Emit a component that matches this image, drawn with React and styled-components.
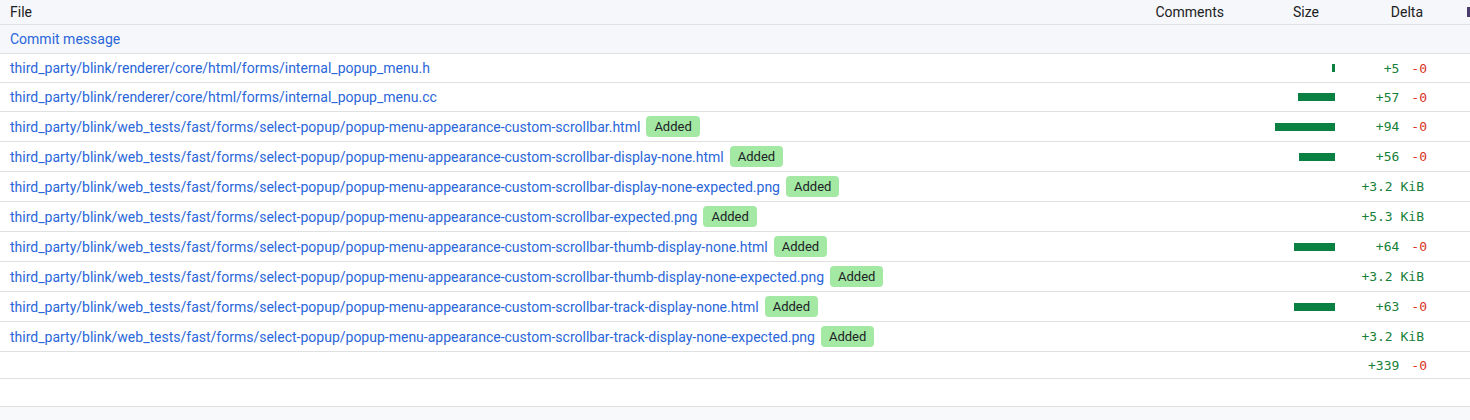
import React from 'react';
import styled, { createGlobalStyle } from 'styled-components';

const GlobalStyle = createGlobalStyle`
  html, body {
    margin: 0;
    padding: 0;
    background: #f8f9fa;
    font-family: Roboto, "Noto Sans", Arial, sans-serif;
    overflow: hidden;
  }
`;

const Table = styled.div`
  width: 1470px;
  background: #ffffff;
  font-size: 14px;
  color: #212121;
  border-bottom: 1px solid #e0e0e0;
`;

const Row = styled.div`
  display: grid;
  grid-template-columns: 1140px 92px 111px 97px 30px;
  align-items: center;
  border-bottom: 1px solid #e0e0e0;
  background: ${(p) => (p.$shaded ? '#f5f7fb' : '#ffffff')};
  min-height: ${(p) => p.$height || 28}px;
  box-sizing: border-box;

  &:last-child {
    border-bottom: none;
  }
`;

const HeaderCell = styled.div`
  line-height: 24px;
  text-align: ${(p) => p.$align || 'left'};
  padding: 0 ${(p) => p.$padRight || 0}px 0 ${(p) => p.$padLeft || 0}px;
  white-space: nowrap;
  overflow: hidden;
`;

const FileCell = styled.div`
  display: flex;
  align-items: center;
  gap: 6px;
  padding: 4px 0 4px 10px;
  line-height: 20px;
  white-space: nowrap;
`;

const FileLink = styled.a`
  color: #2a66d9;
  text-decoration: none;
  cursor: pointer;
`;

const Badge = styled.span`
  display: inline-block;
  background: #a3e9a4;
  color: #202124;
  font-size: 13px;
  line-height: 19px;
  padding: 1px 8px;
  border-radius: 4px;
`;

const Cell = styled.div``;

const SizeCell = styled.div`
  display: flex;
  justify-content: flex-end;
  align-items: center;
  padding-right: 8px;
`;

const Bar = styled.div`
  height: 8px;
  background: #0b8043;
`;

const DeltaCell = styled.div`
  display: flex;
  justify-content: flex-end;
  align-items: center;
  padding-right: ${(p) => (p.$single ? 16 : 13)}px;
  font-family: "DejaVu Sans Mono", "Liberation Mono", monospace;
  font-size: 13px;
  line-height: 19px;
  white-space: nowrap;
`;

const Added = styled.span`
  color: #188038;
`;

const Removed = styled.span`
  color: #d93025;
  margin-left: 12px;
`;

const Edge = styled.div`
  display: flex;
  align-items: center;
  padding-left: 27px;
  overflow: hidden;
`;

const EdgeMark = styled.span`
  display: inline-block;
  width: 3px;
  height: 10px;
  background: #4a3c6b;
`;

/* the clipped first letter of the next column */
const EdgeGlyph = styled.span`
  display: inline-block;
  width: 3px;
  height: 2px;
  margin-top: -6px;
  background: #5f6368;
`;

const files = [
  { path: 'third_party/blink/renderer/core/html/forms/internal_popup_menu.h', bar: 3, plus: '+5', minus: '-0', edge: true },
  { path: 'third_party/blink/renderer/core/html/forms/internal_popup_menu.cc', bar: 37, plus: '+57', minus: '-0' },
  { path: 'third_party/blink/web_tests/fast/forms/select-popup/popup-menu-appearance-custom-scrollbar.html', added: true, bar: 60, plus: '+94', minus: '-0' },
  { path: 'third_party/blink/web_tests/fast/forms/select-popup/popup-menu-appearance-custom-scrollbar-display-none.html', added: true, bar: 36, plus: '+56', minus: '-0' },
  { path: 'third_party/blink/web_tests/fast/forms/select-popup/popup-menu-appearance-custom-scrollbar-display-none-expected.png', added: true, plus: '+3.2 KiB' },
  { path: 'third_party/blink/web_tests/fast/forms/select-popup/popup-menu-appearance-custom-scrollbar-expected.png', added: true, plus: '+5.3 KiB' },
  { path: 'third_party/blink/web_tests/fast/forms/select-popup/popup-menu-appearance-custom-scrollbar-thumb-display-none.html', added: true, bar: 41, plus: '+64', minus: '-0' },
  { path: 'third_party/blink/web_tests/fast/forms/select-popup/popup-menu-appearance-custom-scrollbar-thumb-display-none-expected.png', added: true, plus: '+3.2 KiB' },
  { path: 'third_party/blink/web_tests/fast/forms/select-popup/popup-menu-appearance-custom-scrollbar-track-display-none.html', added: true, bar: 41, plus: '+63', minus: '-0' },
  { path: 'third_party/blink/web_tests/fast/forms/select-popup/popup-menu-appearance-custom-scrollbar-track-display-none-expected.png', added: true, plus: '+3.2 KiB' },
];

const Delta = ({ plus, minus }) => (
  <DeltaCell $single={!minus}>
    <Added>{plus}</Added>
    {minus && <Removed>{minus}</Removed>}
  </DeltaCell>
);

export default function App() {
  return (
    <>
      <GlobalStyle />
      <Table>
        <Row $shaded $height={25}>
          <HeaderCell $padLeft={10}>File</HeaderCell>
          <HeaderCell $align="right" $padRight={8}>Comments</HeaderCell>
          <HeaderCell $align="right" $padRight={24}>Size</HeaderCell>
          <HeaderCell $align="right" $padRight={17}>Delta</HeaderCell>
          <Edge><EdgeMark /></Edge>
        </Row>
        <Row $shaded>
          <FileCell><FileLink>Commit message</FileLink></FileCell>
          <Cell />
          <Cell />
          <Cell />
          <Cell />
        </Row>
        {files.map((f) => (
          <Row key={f.path}>
            <FileCell>
              <FileLink>{f.path}</FileLink>
              {f.added && <Badge>Added</Badge>}
            </FileCell>
            <Cell />
            <SizeCell>{f.bar && <Bar style={{ width: f.bar }} />}</SizeCell>
            <Delta plus={f.plus} minus={f.minus} />
            <Edge>{f.edge && <EdgeGlyph />}</Edge>
          </Row>
        ))}
        <Row $height={27}>
          <Cell />
          <Cell />
          <Cell />
          <Delta plus="+339" minus="-0" />
          <Cell />
        </Row>
        <Row $height={27}>
          <Cell />
          <Cell />
          <Cell />
          <Cell />
          <Cell />
        </Row>
      </Table>
    </>
  );
}
